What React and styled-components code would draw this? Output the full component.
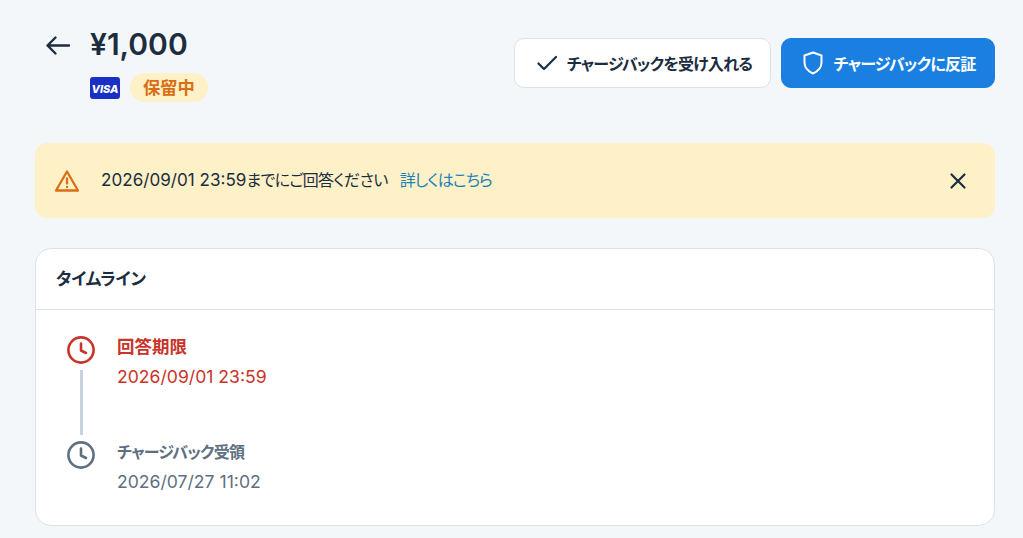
import React from "react";
import styled, { createGlobalStyle } from "styled-components";

const FONT = `Inter, "Noto Sans CJK JP", sans-serif`;

const GlobalStyle = createGlobalStyle`
  html, body {
    margin: 0;
    background: #f4f7fa;
    font-family: ${FONT};
    color: #1c2d3f;
    font-feature-settings: "palt";
  }
  * { box-sizing: border-box; }
`;

const Page = styled.div`
  width: 1023px;
  height: 538px;
  overflow: hidden;
  padding: 24px 28px 0 35px;
`;

const Header = styled.header`
  display: flex;
  justify-content: space-between;
  align-items: flex-start;
  height: 119px;
`;

const TitleArea = styled.div`
  display: flex;
  align-items: flex-start;
  padding-left: 9px;
`;

const BackButton = styled.button`
  display: flex;
  width: 28px;
  height: 28px;
  margin: 7px 18px 0 0;
  padding: 0;
  background: none;
  border: 0;
  color: #1c2d3f;
`;

const Amount = styled.h1`
  margin: 0;
  font-size: 30px;
  line-height: 40px;
  font-weight: 600;
`;

const Meta = styled.div`
  display: flex;
  align-items: center;
  gap: 10px;
  margin-top: 9px;
`;

const StatusBadge = styled.span`
  padding: 0 13px;
  height: 29px;
  border-radius: 15px;
  background: #fef0c7;
  color: #d96e14;
  font-size: 17.3px;
  font-weight: 600;
  line-height: 29px;
`;

const Actions = styled.div`
  display: flex;
  gap: 10px;
  margin-top: 14px;
`;

const ActionButton = styled.button`
  display: flex;
  align-items: center;
  justify-content: center;
  gap: ${(p) => (p.$primary ? "9px" : "6px")};
  width: ${(p) => (p.$primary ? "214px" : "257px")};
  height: 50px;
  padding: 0 0 0 ${(p) => (p.$primary ? "0" : "4px")};
  border-radius: 10px;
  border: 1px solid ${(p) => (p.$primary ? "#1a7fe0" : "#dce2ea")};
  background: ${(p) => (p.$primary ? "#1a7fe0" : "#fff")};
  color: ${(p) => (p.$primary ? "#fff" : "#1c2d3f")};
  font-family: ${FONT};
  font-feature-settings: "palt";
  font-size: 16px;
  font-weight: 600;
  letter-spacing: -0.75px;
`;

const Alert = styled.div`
  display: flex;
  align-items: center;
  height: 75px;
  padding: 0 25px 0 20px;
  border-radius: 12px;
  background: #fef0c7;
  font-size: 16px;
`;

const AlertText = styled.span`
  margin: -3px 0 0 22px;
  letter-spacing: -0.6px;
`;

const AlertDate = styled.span`
  font-size: 17.1px;
  letter-spacing: 0;
`;

const AlertLink = styled.a`
  margin: -3px 0 0 12px;
  color: #1b82b8;
  letter-spacing: -0.85px;
`;

const CloseButton = styled.button`
  display: flex;
  margin-left: auto;
  padding: 0;
  border: 0;
  background: none;
  color: #1c2d3f;
`;

const Card = styled.section`
  height: 278px;
  margin-top: 30px;
  border: 1px solid #dce2ea;
  border-radius: 16px;
  background: #fff;
`;

const CardHeader = styled.h2`
  margin: 0;
  height: 61px;
  padding: 0 20px;
  border-bottom: 1px solid #dce2ea;
  font-size: 17px;
  font-weight: 600;
  line-height: 61px;
  letter-spacing: -0.3px;
`;

const Timeline = styled.div`
  padding: 25px 30px 0;
`;

const Event = styled.div`
  display: grid;
  grid-template-columns: 30px 1fr;
  column-gap: 21px;
  height: ${(p) => (p.$last ? "auto" : "105px")};
  color: ${(p) => (p.$danger ? "#c9342a" : "#5f6f82")};
`;

const Marker = styled.div`
  display: flex;
  flex-direction: column;
  align-items: center;
`;

const Connector = styled.div`
  width: 3px;
  height: 65px;
  margin-top: 5px;
  background: #c7d3e1;
`;

const EventTitle = styled.div`
  font-size: ${(p) => (p.$danger ? "17.5px" : "16px")};
  font-weight: 600;
  line-height: 24px;
  letter-spacing: ${(p) => (p.$danger ? "0" : "-0.75px")};
`;

const EventTime = styled.div`
  margin-top: 6px;
  font-size: 17.6px;
  line-height: 24px;
`;

const ClockIcon = () => (
  <svg width="30" height="30" viewBox="0 0 30 30" fill="none" stroke="currentColor" strokeWidth="2.6" strokeLinecap="round" strokeLinejoin="round">
    <circle cx="15" cy="15" r="12.6" />
    <path d="M15 8.500V15.500L20 18" />
  </svg>
);

const VisaLogo = () => (
  <svg width="30" height="22" viewBox="0 0 30 22">
    <rect width="30" height="22" rx="3" fill="#1a2fc4" />
    <text x="15" y="15.500" textAnchor="middle" fill="#fff" fontFamily="Inter, sans-serif" fontSize="11" fontWeight="800" fontStyle="italic">VISA</text>
  </svg>
);

const TimelineEvent = ({ title, time, danger, last }) => (
  <Event $danger={danger} $last={last}>
    <Marker>
      <ClockIcon />
      {!last && <Connector />}
    </Marker>
    <div>
      <EventTitle $danger={danger}>{title}</EventTitle>
      <EventTime>{time}</EventTime>
    </div>
  </Event>
);

export default function App() {
  return (
    <Page>
      <GlobalStyle />
      <Header>
        <TitleArea>
          <BackButton aria-label="戻る">
            <svg width="28" height="28" viewBox="0 0 28 28" fill="none" stroke="currentColor" strokeWidth="2.4" strokeLinecap="round" strokeLinejoin="round">
              <path d="M25 14.500H3.500M11.500 6.500L3.500 14.500L11.500 22.500" />
            </svg>
          </BackButton>
          <div>
            <Amount>¥1,000</Amount>
            <Meta>
              <VisaLogo />
              <StatusBadge>保留中</StatusBadge>
            </Meta>
          </div>
        </TitleArea>
        <Actions>
          <ActionButton>
            <svg width="24" height="24" viewBox="0 0 24 24" fill="none" stroke="currentColor" strokeWidth="2.2" strokeLinecap="round" strokeLinejoin="round">
              <path d="M1.500 12.500L7 18L19 6" />
            </svg>
            チャージバックを受け入れる
          </ActionButton>
          <ActionButton $primary>
            <svg width="24" height="24" viewBox="0 0 24 24" fill="none" stroke="currentColor" strokeWidth="2" strokeLinecap="round" strokeLinejoin="round">
              <path d="M12 1.500L20.500 4.500V11.500C20.500 17 16.500 20.500 12 22.500C7.500 20.500 3.500 17 3.500 11.500V4.500Z" />
            </svg>
            チャージバックに反証
          </ActionButton>
        </Actions>
      </Header>
      <Alert>
        <svg width="24" height="24" viewBox="0 0 24 24" fill="none" stroke="#d96e14" strokeWidth="2.300" strokeLinecap="round" strokeLinejoin="round">
          <path d="M12 2.500L23 21.500H1Z" />
          <path d="M12 9.500V14.500M12 18V18.100" />
        </svg>
        <AlertText><AlertDate>2026/09/01 23:59</AlertDate>までにご回答ください</AlertText>
        <AlertLink>詳しくはこちら</AlertLink>
        <CloseButton aria-label="閉じる">
          <svg width="24" height="24" viewBox="0 0 24 24" fill="none" stroke="currentColor" strokeWidth="2.2" strokeLinecap="round">
            <path d="M5.500 5.500L18.500 18.500M18.500 5.500L5.500 18.500" />
          </svg>
        </CloseButton>
      </Alert>
      <Card>
        <CardHeader>タイムライン</CardHeader>
        <Timeline>
          <TimelineEvent danger title="回答期限" time="2026/09/01 23:59" />
          <TimelineEvent last title="チャージバック受領" time="2026/07/27 11:02" />
        </Timeline>
      </Card>
    </Page>
  );
}
